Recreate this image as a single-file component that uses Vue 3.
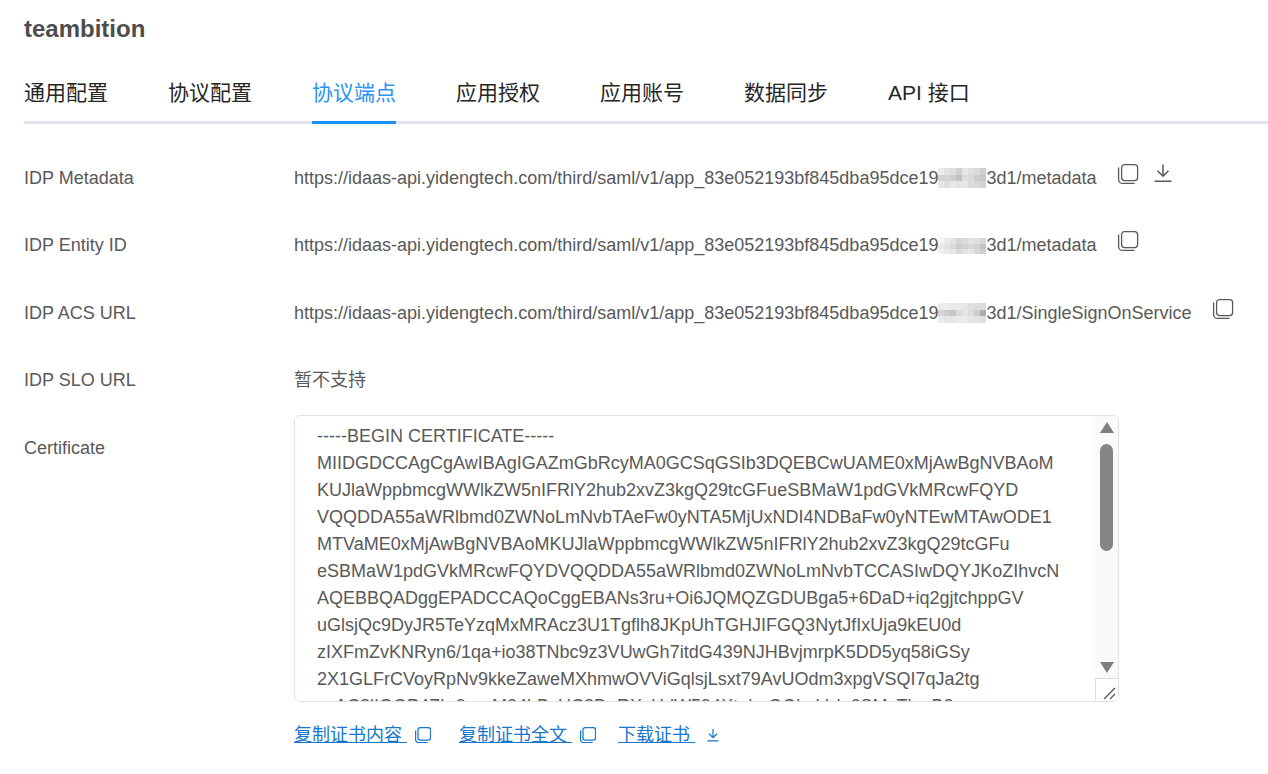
<script setup>
const tabs = ['通用配置', '协议配置', '协议端点', '应用授权', '应用账号', '数据同步', 'API 接口']
const prefix = 'https://idaas-api.yidengtech.com/third/saml/v1/app_83e052193bf845dba95dce19'
const rows = [
  {
    label: 'IDP Metadata', suffix: '3d1/metadata', download: true, h: 20, top: 3,
    patches: ['#f4f4f4', '#ececec', '#e6e6e6', '#d9d9d9', '#f0f0f0', '#e8e8e8', '#e4e4e4', '#d8d8d8',
      '#dcdcdc', '#dedede', '#d4d4d4', '#c9c9c9', '#e6e6e6', '#e2e2e2', '#d6d6d6', '#d2d2d2',
      '#f0f0f0', '#e8e8e8', '#f2f2f2', '#ececec', '#f0f0f0', '#e4e4e4', '#e0e0e0', '#dcdcdc'],
  },
  {
    label: 'IDP Entity ID', suffix: '3d1/metadata', download: false, h: 16, top: 6,
    patches: ['#ffffff', '#f4f4f4', '#ececec', '#dedede', '#e4e4e4', '#ececec', '#e8e8e8', '#e0e0e0',
      '#f2f2f2', '#ececec', '#e2e2e2', '#d4d4d4', '#dadada', '#e0e0e0', '#dcdcdc', '#cccccc',
      '#fafafa', '#f2f2f2', '#f0f0f0', '#e2e2e2', '#eaeaea', '#f0f0f0', '#e2e2e2', '#d8d8d8'],
  },
  {
    label: 'IDP ACS URL', suffix: '3d1/SingleSignOnService', download: false, h: 20, top: 3,
    patches: ['#f6f6f6', '#f6f6f6', '#f4f4f4', '#f4f4f4', '#f0f0f0', '#e8e8e8', '#e6e6e6', '#e4e4e4',
      '#dddddd', '#d6d6d6', '#cfcfcf', '#e4e4e4', '#eeeeee', '#e6e6e6', '#d6d6d6', '#b5b5b5',
      '#f4f4f4', '#f0f0f0', '#f0f0f0', '#f4f4f4', '#f6f6f6', '#f0f0f0', '#ececec', '#e8e8e8'],
  },
]
const certLines = [
  '-----BEGIN CERTIFICATE-----',
  'MIIDGDCCAgCgAwIBAgIGAZmGbRcyMA0GCSqGSIb3DQEBCwUAME0xMjAwBgNVBAoM',
  'KUJlaWppbmcgWWlkZW5nIFRlY2hub2xvZ3kgQ29tcGFueSBMaW1pdGVkMRcwFQYD',
  'VQQDDA55aWRlbmd0ZWNoLmNvbTAeFw0yNTA5MjUxNDI4NDBaFw0yNTEwMTAwODE1',
  'MTVaME0xMjAwBgNVBAoMKUJlaWppbmcgWWlkZW5nIFRlY2hub2xvZ3kgQ29tcGFu',
  'eSBMaW1pdGVkMRcwFQYDVQQDDA55aWRlbmd0ZWNoLmNvbTCCASIwDQYJKoZIhvcN',
  'AQEBBQADggEPADCCAQoCggEBANs3ru+Oi6JQMQZGDUBga5+6DaD+iq2gjtchppGV',
  'uGlsjQc9DyJR5TeYzqMxMRAcz3U1Tgflh8JKpUhTGHJIFGQ3NytJfIxUja9kEU0d',
  'zIXFmZvKNRyn6/1qa+io38TNbc9z3VUwGh7itdG439NJHBvjmrpK5DD5yq58iGSy',
  '2X1GLFrCVoyRpNv9kkeZaweMXhmwOVViGqlsjLsxt79AvUOdm3xpgVSQI7qJa2tg',
  'xxAC8lIOOP4ZLr9wwM24hBxUC8DgRXvHdW594XtnheGGbeVyln6SMyTkmB2',
]
</script>

<template>
  <div class="page">
    <h1 class="title">teambition</h1>
    <nav class="tabs">
      <div v-for="t in tabs" :key="t" class="tab" :class="{ active: t === '协议端点' }">{{ t }}</div>
    </nav>
    <div class="rows">
      <div v-for="r in rows" :key="r.label" class="row">
        <div class="label">{{ r.label }}</div>
        <div class="value">
          <span>{{ prefix }}</span>
          <span class="blur" :style="{ height: r.h + 'px', marginTop: r.top + 'px' }"><i v-for="(c, i) in r.patches" :key="i" :style="{ background: c }"></i></span>
          <span>{{ r.suffix }}</span>
          <svg class="ic copy" viewBox="0 0 22 22" fill="none" stroke="#595959" stroke-width="1.3">
            <rect x="4.6" y="1.6" width="16" height="16" rx="3" />
            <path d="M1.6 5v11.4a4 4 0 0 0 4 4H17" stroke-linecap="round" />
          </svg>
          <svg v-if="r.download" class="ic dl" viewBox="0 0 20 20" fill="none" stroke="#595959" stroke-width="1.5">
            <path d="M10 1.5V13M4.5 7.8 10 13.2l5.5-5.4M1.5 18.2h17" />
          </svg>
        </div>
      </div>
      <div class="row slo">
        <div class="label">IDP SLO URL</div>
        <div class="value">暂不支持</div>
      </div>
      <div class="row cert-row">
        <div class="label cert-label">Certificate</div>
        <div class="cert-col">
          <div class="cert">
            <div v-for="l in certLines" :key="l" class="cert-line">{{ l }}</div>
            <div class="scrollbar">
              <span class="arrow up"></span>
              <span class="thumb"></span>
              <span class="arrow down"></span>
              <span class="grip">
                <svg width="22" height="22" viewBox="0 0 22 22" stroke="#555" stroke-width="1.3"><path d="M8 20 19 9M14 20l5-5" /></svg>
              </span>
            </div>
          </div>
          <div class="links">
            <a class="link">复制证书内容&nbsp;</a>
            <svg class="lic" viewBox="1 1 14 14" fill="none" stroke="#1677cc" stroke-width="1.1"><rect x="3.6" y="1.5" width="11" height="11" rx="2" /><path d="M1.5 4v8a2.6 2.6 0 0 0 2.6 2.6H12" /></svg>
            <a class="link second">复制证书全文&nbsp;</a>
            <svg class="lic" viewBox="1 1 14 14" fill="none" stroke="#1677cc" stroke-width="1.1"><rect x="3.6" y="1.5" width="11" height="11" rx="2" /><path d="M1.5 4v8a2.6 2.6 0 0 0 2.6 2.6H12" /></svg>
            <a class="link third">下载证书&nbsp;</a>
            <svg class="lic dl2" viewBox="0 0 14 14" fill="none" stroke="#1677cc" stroke-width="1.2"><path d="M7 1v8.4M3 5.8l4 3.8 4-3.8M1.5 12.8h11" /></svg>
          </div>
        </div>
      </div>
    </div>
  </div>
</template>

<style>
html, body { margin: 0; background: #fff; }
</style>

<style scoped>
.page {
  height: 774px;
  overflow: hidden;
  box-sizing: border-box;
  padding: 15px 0 0 24px;
  font-family: "Liberation Sans", "Noto Sans CJK SC", sans-serif;
  color: #595959;
}
.title {
  margin: 0;
  font-size: 24px;
  line-height: 28px;
  font-weight: 700;
  color: #4d4d4d;
}
.tabs {
  display: flex;
  gap: 60px;
  margin-top: 21px;
  border-bottom: 3px solid #e1e5ec;
  height: 60px;
  box-sizing: border-box;
  padding-top: 14px;
}
.tab {
  font-size: 21px;
  line-height: 30px;
  height: 46px;
  box-sizing: border-box;
  color: #262626;
}
.tab.active {
  color: #2a93f5;
  border-bottom: 3px solid #1890ff;
}
.rows {
  padding-top: 40.9px;
}
.row {
  display: flex;
  height: 67.5px;
  font-size: 18px;
  line-height: 27px;
}
.row.slo { height: 48px; }
.label {
  width: 270px;
  flex: none;
  color: #595959;
}
.cert-label { padding-top: 20px; }
.value {
  display: flex;
  align-items: flex-start;
  white-space: nowrap;
  color: #595959;
}
.blur {
  display: grid;
  grid-template-columns: repeat(8, 1fr);
  grid-auto-rows: 1fr;
  width: 48px;
  filter: blur(0.7px) brightness(0.96);
}
.ic.copy { width: 22px; height: 22px; margin-left: 20px; margin-top: -2px; }
.ic.dl { width: 20px; height: 20px; margin-left: 14px; margin-top: -2px; }
.cert-row { height: auto; }
.cert-col { display: flex; flex-direction: column; }
.cert {
  position: relative;
  width: 825px;
  height: 287px;
  box-sizing: border-box;
  border: 1px solid #e1e1e8;
  border-radius: 6px;
  padding: 7px 0 0 22px;
  overflow: hidden;
}
.cert-line {
  height: 27px;
  line-height: 27px;
  white-space: nowrap;
  color: #595959;
}
.scrollbar {
  position: absolute;
  top: 0;
  right: 0;
  bottom: 0;
  width: 23px;
  background: #fafafa;
  display: flex;
  flex-direction: column;
  align-items: center;
}
.arrow { width: 0; height: 0; border-left: 7.5px solid transparent; border-right: 7.5px solid transparent; }
.arrow.up { border-bottom: 11px solid #7f7f7f; margin-top: 6px; }
.thumb { width: 13px; height: 107px; border-radius: 7px; background: #858585; margin-top: 11px; }
.arrow.down { border-top: 11px solid #7f7f7f; margin-top: auto; margin-bottom: 28px; }
.grip {
  position: absolute;
  right: 0;
  bottom: 0;
  width: 23px;
  height: 23px;
  box-sizing: border-box;
  border-left: 1px solid #dcdce0;
  border-top: 1px solid #dcdce0;
  background: #fff;
}
.links {
  display: flex;
  align-items: center;
  margin-top: 20px;
  font-size: 18px;
  line-height: 26px;
}
.link { color: #1677cc; text-decoration: underline; }
.second { margin-left: 28px; }
.third { margin-left: 22px; }
.lic { width: 16px; height: 16px; margin-left: 8px; }
.lic.dl2 { width: 14px; height: 14px; margin-left: 11px; }
</style>
